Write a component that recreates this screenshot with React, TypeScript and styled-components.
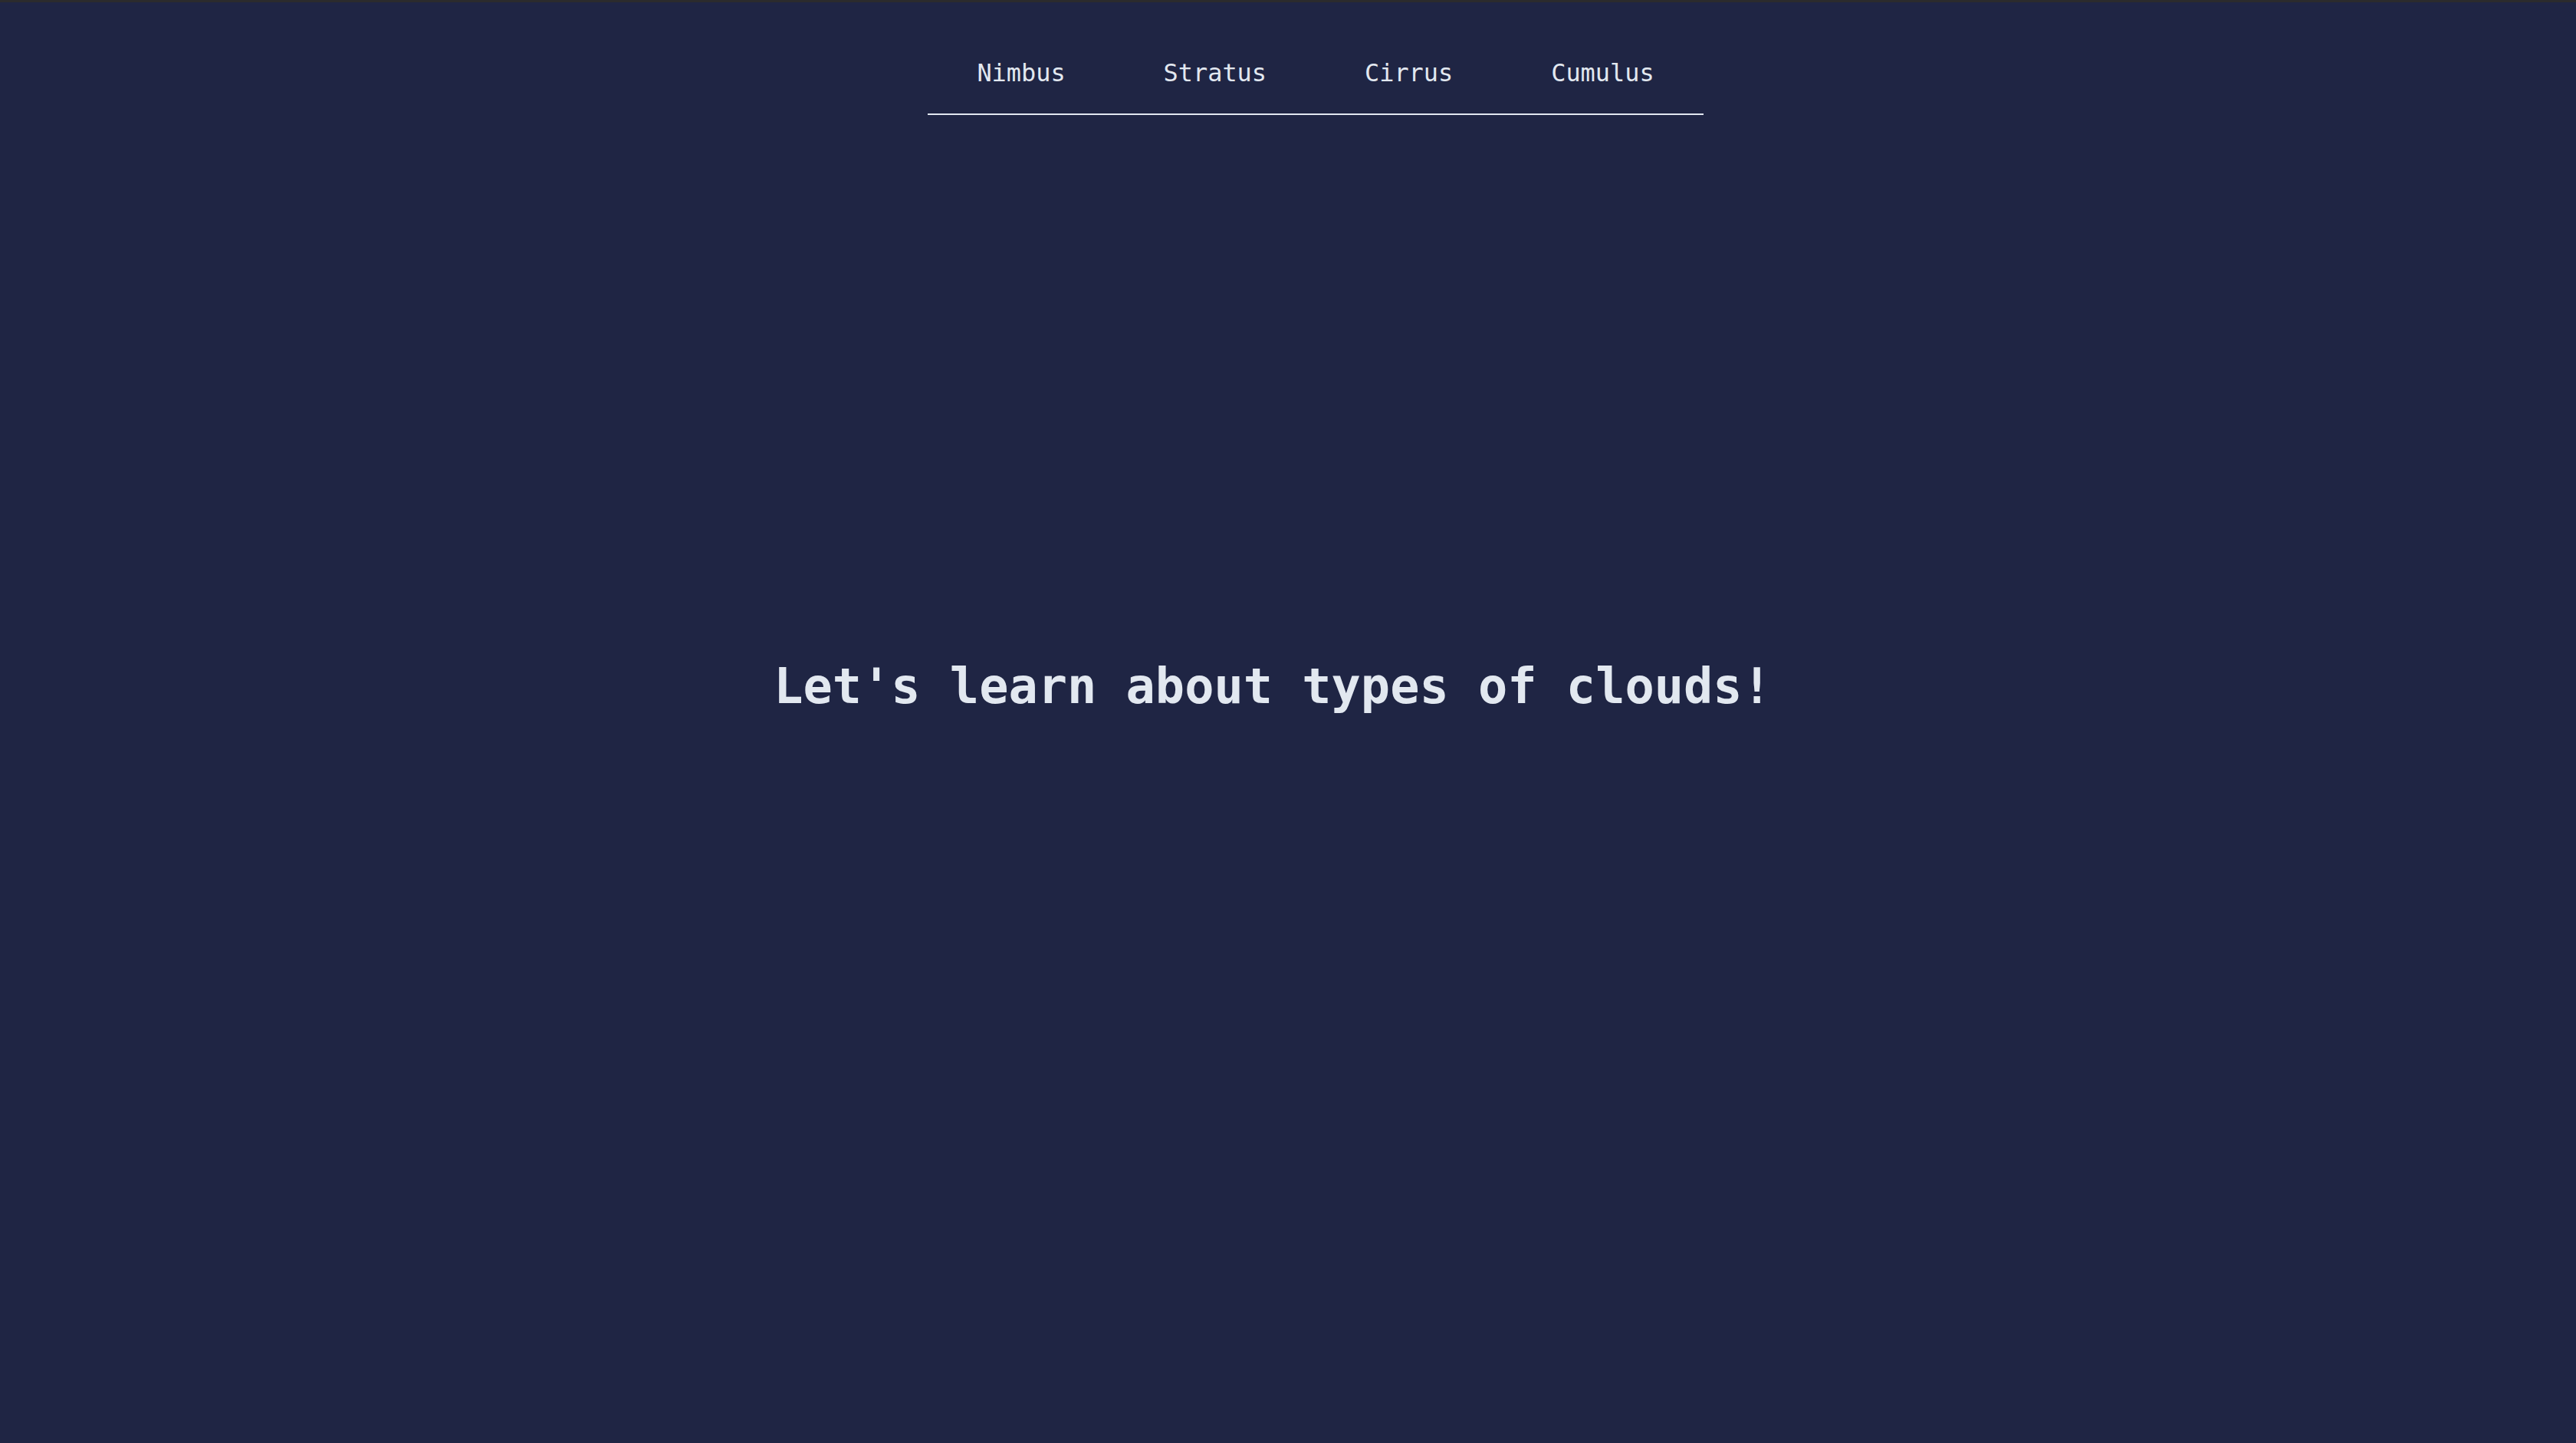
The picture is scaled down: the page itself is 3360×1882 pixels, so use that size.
import React from "react";
import styled, { createGlobalStyle } from "styled-components";

const GlobalStyle = createGlobalStyle`
  html, body {
    margin: 0;
    padding: 0;
    background: #1f2544;
  }
  body {
    font-family: "DejaVu Sans Mono", "Liberation Mono", monospace;
    color: #e2e8f0;
  }
`;

const Page = styled.div`
  min-height: 1879px;
  border-top: 3px solid #2b2b2d;
  background: #1f2544;
  display: flex;
  flex-direction: column;
`;

const NavWrap = styled.header`
  display: flex;
  justify-content: center;
  padding-left: 72px;
  margin-top: 68px;
`;

const NavList = styled.ul`
  display: flex;
  list-style: none;
  margin: 0;
  padding: 0;
  border-bottom: 2px solid #e2e8f0;
`;

const NavItem = styled.li`
  display: block;
`;

const NavLink = styled.a`
  display: block;
  padding: 0 64px 29px;
  font-size: 31.9px;
  line-height: 48px;
  color: #e2e8f0;
  text-decoration: none;
  cursor: pointer;
`;

const Hero = styled.main`
  display: flex;
  justify-content: center;
  padding-right: 40px;
  margin-top: 713px;
`;

const Title = styled.h1`
  margin: 0;
  font-size: 63.6px;
  line-height: 64px;
  font-weight: 700;
  color: #e2e8f0;
  white-space: nowrap;
`;

const links = ["Nimbus", "Stratus", "Cirrus", "Cumulus"];

export default function App() {
  return (
    <>
      <GlobalStyle />
      <Page>
        <NavWrap>
          <NavList>
            {links.map((l) => (
              <NavItem key={l}>
                <NavLink>{l}</NavLink>
              </NavItem>
            ))}
          </NavList>
        </NavWrap>
        <Hero>
          <Title>Let's learn about types of clouds!</Title>
        </Hero>
      </Page>
    </>
  );
}
